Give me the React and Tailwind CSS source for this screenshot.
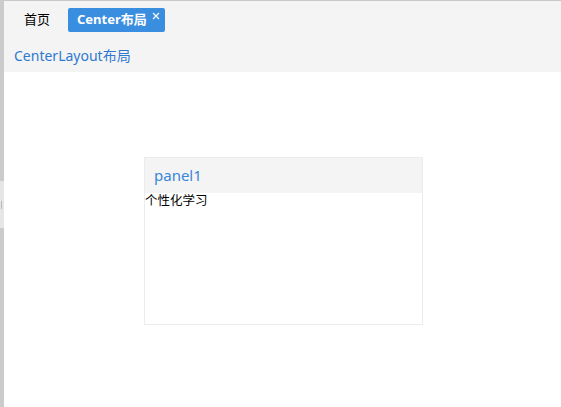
import React from "react";

export default function App() {
  return (
    <div
      className="flex w-[561px] h-[407px] overflow-hidden bg-white"
      style={{ fontFamily: '"Noto Sans", "Noto Sans CJK SC", sans-serif' }}
    >
      <div className="relative w-[4px] h-full bg-[#cbcbcb] shrink-0">
        <div className="absolute left-0 top-[181px] w-[4px] h-[47px] bg-[#e6e6e6] flex items-center">
          <div className="w-[1px] h-[8px] bg-[#b8b8b8] ml-[1px]" />
        </div>
      </div>
      <div className="flex-1 flex flex-col">
        <div className="h-[1px] bg-[#c8c8c8]" />
        <div className="h-[71px] bg-[#f4f4f4] flex flex-col">
          <div className="flex items-center h-[36px] pt-[1px] pl-[16px] gap-[14px]">
            <span className="text-[13px] text-black leading-none px-[4px]">首页</span>
            <div className="relative h-[24px] w-[97px] bg-[#3a8ee0] rounded-[2px] flex items-center pl-[9px]">
              <span className="text-[13px] font-bold text-white leading-none">Center布局</span>
              <svg className="absolute right-[5px] top-[4px]" width="8" height="8" viewBox="0 0 8 8">
                <path d="M1 1L7 7M7 1L1 7" stroke="white" strokeWidth="1.2" />
              </svg>
            </div>
          </div>
          <div className="pl-[10px] pt-[12px] text-[14px] text-[#2f78d0] leading-none">CenterLayout布局</div>
        </div>
        <div className="flex-1 flex items-center justify-center pl-[2px] pt-[2px]">
          <div className="w-[279px] h-[168px] border border-[#ececec] flex flex-col">
            <div className="h-[35px] bg-[#f4f4f4] flex items-center pl-[9px] text-[15px] text-[#3a86d8]">panel1</div>
            <div className="text-[12.5px] text-black leading-[16px]">个性化学习</div>
          </div>
        </div>
      </div>
    </div>
  );
}
